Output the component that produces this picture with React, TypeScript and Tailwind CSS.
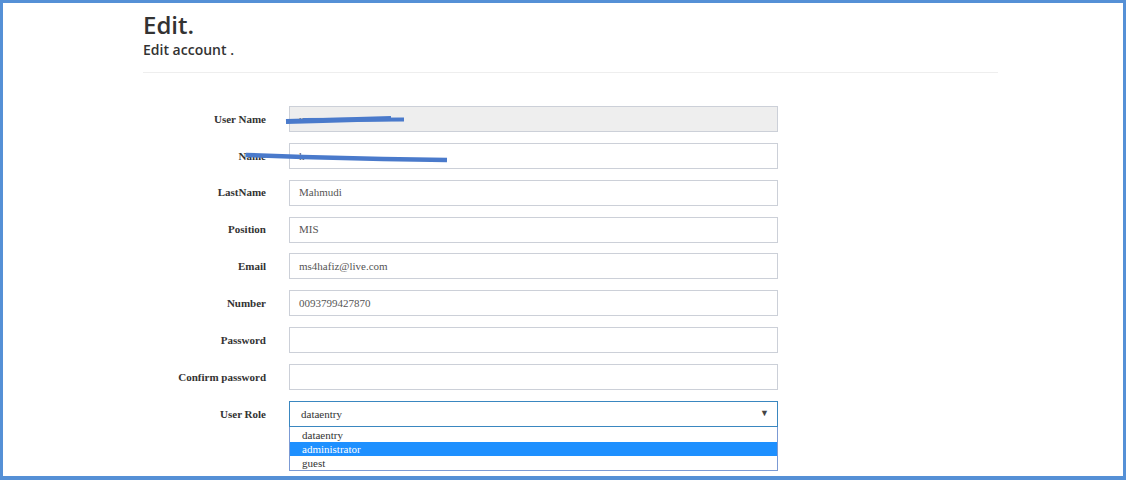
import React from "react";

const serif = { fontFamily: '"Liberation Serif", "Times New Roman", serif' } as React.CSSProperties;

function Row({ label, value, disabled }: { label: string; value?: string; disabled?: boolean }) {
  return (
    <div className="flex items-center h-[26px]">
      <div className="w-[123px] text-right text-[11px] font-bold text-[#333]" style={serif}>
        {label}
      </div>
      <div
        className={`ml-[23px] w-[489px] h-[26px] border border-[#ccd0d8] flex items-center pl-[9px] text-[11px] text-[#555] ${
          disabled ? "bg-[#eeeeee]" : "bg-white"
        }`}
        style={serif}
      >
        {value}
      </div>
    </div>
  );
}

export default function App() {
  return (
    <div className="relative w-[1126px] h-[480px] bg-white border-[#5590d6] border-l-[3px] border-t-[3px] border-r-[3px] border-b-[4px] overflow-hidden">
      <div className="pl-[140px] w-[995px]" style={{ fontFamily: '"Open Sans", "Noto Sans", sans-serif' }}>
        <h2 className="text-[24px] leading-[26px] font-semibold text-[#333] pt-[9px]">Edit.</h2>
        <h4 className="text-[14px] leading-[16px] font-semibold text-[#333] mt-[4px]">Edit account .</h4>
        <div className="mt-[14px] h-px bg-[#eeeeee] w-[855px]" />
        <div className="mt-[33px] flex flex-col gap-[10.85px]">
          <Row label="User Name" value="user" disabled />
          <Row label="Name" value="k" />
          <Row label="LastName" value="Mahmudi" />
          <Row label="Position" value="MIS" />
          <Row label="Email" value="ms4hafiz@live.com" />
          <Row label="Number" value="0093799427870" />
          <Row label="Password" value="" />
          <Row label="Confirm password" value="" />
          <div className="flex items-start">
            <div className="w-[123px] text-right text-[11px] font-bold text-[#333] mt-[5px]" style={serif}>
              User Role
            </div>
            <div className="ml-[23px] w-[489px] relative">
              <div
                className="h-[26px] border border-[#3a87c0] bg-white flex items-center pl-[11px] pr-[8px] text-[11px] text-[#333]"
                style={serif}
              >
                <span className="flex-1">dataentry</span>
                <span className="text-[9px] text-[#444]">▼</span>
              </div>
              <div className="border border-[#7b9ad4] border-t-0 bg-white text-[11px] text-[#333] pt-[1px]" style={serif}>
                <div className="h-[14px] leading-[14px] pl-[12px]">dataentry</div>
                <div className="h-[14px] leading-[14px] pl-[12px] bg-[#1e90ff] text-white">administrator</div>
                <div className="h-[14px] leading-[14px] pl-[12px]">guest</div>
              </div>
            </div>
          </div>
        </div>
      </div>
      <svg className="absolute left-0 top-0 pointer-events-none" width="1126" height="480">
        <path d="M283 118.5 L 320 117.5 L 388 115.5" stroke="#4a7acb" strokeWidth="5" fill="none" />
        <path d="M300 117 L 401 116.5" stroke="#4a7acb" strokeWidth="4" fill="none" />
        <path d="M243 152 L 300 154 L 380 156 L 444 157" stroke="#4a7acb" strokeWidth="4.5" fill="none" />
      </svg>
    </div>
  );
}
